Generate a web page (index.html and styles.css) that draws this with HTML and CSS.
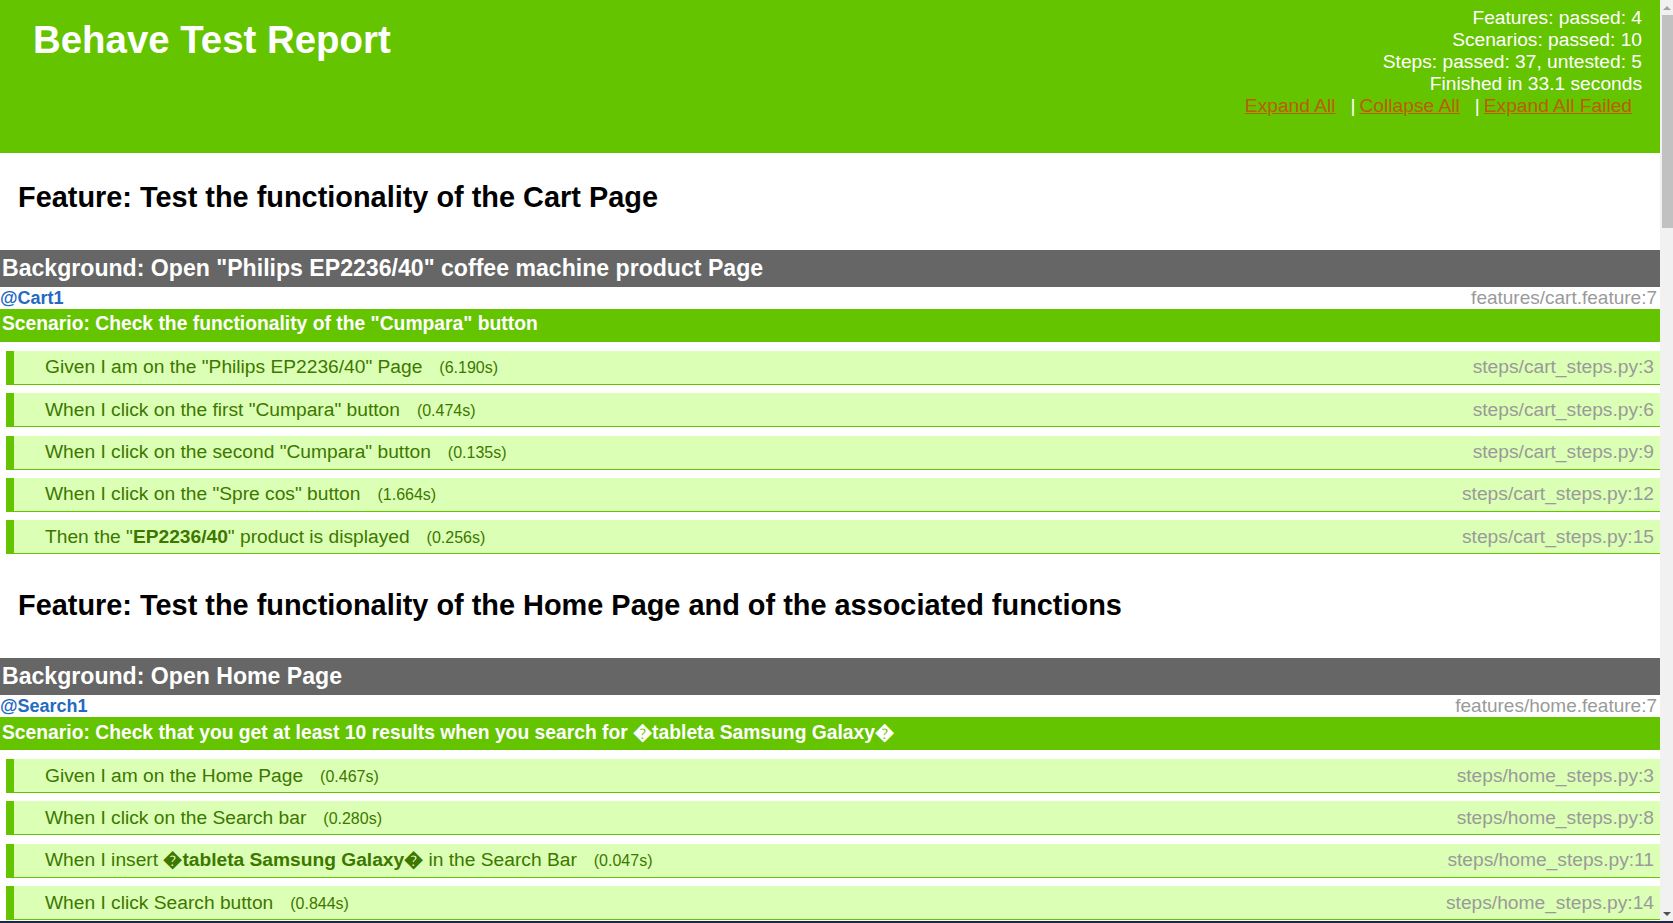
FILE: index.html
```html
<!DOCTYPE html>
<html lang="en">
<head>
<meta charset="utf-8">
<title>Behave Test Report</title>
<link rel="stylesheet" href="styles.css">
</head>
<body>
<div class="screen">
  <div class="viewport">
    <div class="page">
      <header class="report-header">
        <h1 class="report-title">Behave Test Report</h1>
        <div class="summary">
          <p>Features: passed: 4</p>
          <p>Scenarios: passed: 10</p>
          <p>Steps: passed: 37, untested: 5</p>
          <p>Finished in 33.1 seconds</p>
          <p class="controls"><a href="#">Expand All</a><span class="sep">|</span><a href="#">Collapse All</a><span class="sep">|</span><a href="#">Expand All Failed</a></p>
        </div>
      </header>

      <section class="feature">
        <h2 class="feature-title">Feature: Test the functionality of the Cart Page</h2>
        <h3 class="background-title">Background: Open "Philips EP2236/40" coffee machine product Page</h3>
        <div class="tag-line"><span class="tag">@Cart1</span><span class="scenario-file">features/cart.feature:7</span></div>
        <h4 class="scenario-title">Scenario: Check the functionality of the "Cumpara" button</h4>
        <div class="step"><span class="step-text">Given I am on the "Philips EP2236/40" Page<span class="duration">(6.190s)</span></span><span class="step-file">steps/cart_steps.py:3</span></div>
        <div class="step"><span class="step-text">When I click on the first "Cumpara" button<span class="duration">(0.474s)</span></span><span class="step-file">steps/cart_steps.py:6</span></div>
        <div class="step"><span class="step-text">When I click on the second "Cumpara" button<span class="duration">(0.135s)</span></span><span class="step-file">steps/cart_steps.py:9</span></div>
        <div class="step"><span class="step-text">When I click on the "Spre cos" button<span class="duration">(1.664s)</span></span><span class="step-file">steps/cart_steps.py:12</span></div>
        <div class="step"><span class="step-text">Then the "<b>EP2236/40</b>" product is displayed<span class="duration">(0.256s)</span></span><span class="step-file">steps/cart_steps.py:15</span></div>
      </section>

      <section class="feature">
        <h2 class="feature-title">Feature: Test the functionality of the Home Page and of the associated functions</h2>
        <h3 class="background-title">Background: Open Home Page</h3>
        <div class="tag-line"><span class="tag">@Search1</span><span class="scenario-file">features/home.feature:7</span></div>
        <h4 class="scenario-title">Scenario: Check that you get at least 10 results when you search for &#xFFFD;tableta Samsung Galaxy&#xFFFD;</h4>
        <div class="step"><span class="step-text">Given I am on the Home Page<span class="duration">(0.467s)</span></span><span class="step-file">steps/home_steps.py:3</span></div>
        <div class="step"><span class="step-text">When I click on the Search bar<span class="duration">(0.280s)</span></span><span class="step-file">steps/home_steps.py:8</span></div>
        <div class="step"><span class="step-text">When I insert <b>&#xFFFD;tableta Samsung Galaxy&#xFFFD;</b> in the Search Bar<span class="duration">(0.047s)</span></span><span class="step-file">steps/home_steps.py:11</span></div>
        <div class="step"><span class="step-text">When I click Search button<span class="duration">(0.844s)</span></span><span class="step-file">steps/home_steps.py:14</span></div>
      </section>
    </div>
    <div class="scrollbar">
      <div class="sb-btn"><span class="arrow-up"></span></div>
      <div class="sb-track"><div class="sb-thumb"></div></div>
      <div class="sb-btn"><span class="arrow-down"></span></div>
    </div>
  </div>
  <div class="taskbar-edge"></div>
</div>
</body>
</html>
```

FILE: styles.css
```css
html, body {
  margin: 0;
  padding: 0;
}

body {
  font-family: "Liberation Sans", Arial, sans-serif;
  background: #fff;
  color: #000;
}

.screen {
  display: flex;
  flex-direction: column;
  height: 923px;
  overflow: hidden;
}

.viewport {
  flex: 1;
  min-height: 0;
  display: flex;
}

.page {
  flex: 1;
  min-width: 0;
  overflow: hidden;
}

.taskbar-edge {
  height: 2px;
  background: #1d2a42;
}

/* header */
.report-header {
  height: 153px;
  background: #65c400;
  color: #fff;
  display: flex;
  justify-content: space-between;
  align-items: flex-start;
}

.report-title {
  margin: 0;
  padding: 17.5px 0 0 33px;
  font-size: 38.4px;
  line-height: 44px;
  font-weight: bold;
}

.summary {
  padding: 7px 18px 0 0;
  text-align: right;
  font-size: 19.2px;
  line-height: 22.1px;
}

.summary p {
  margin: 0;
}

.summary .controls {
  margin-right: 10px;
}

.controls a {
  color: #be5c00;
  text-decoration: underline;
}

.controls .sep {
  margin: 0 4px 0 15px;
  color: #fff;
}

/* features */
.feature {
  padding-top: 27.5px;
}

.feature + .feature {
  padding-top: 26px;
}

.feature-title {
  margin: 0 0 36.3px;
  padding-left: 18px;
  font-size: 28.9px;
  line-height: 33px;
  font-weight: bold;
}

.background-title {
  margin: 0;
  padding: 5px 3px 6px 2px;
  background: #666;
  color: #fff;
  font-size: 23.1px;
  line-height: 26px;
  font-weight: bold;
}

.tag-line {
  display: flex;
  justify-content: space-between;
  align-items: baseline;
  height: 22px;
  font-size: 19px;
  line-height: 22px;
  padding-right: 3px;
}

.tag {
  color: #246ac1;
  font-weight: bold;
  font-size: 18px;
}

.scenario-file {
  color: #9a9a9a;
}

.scenario-title {
  margin: 0 0 9px;
  padding: 4.5px 3px 6.5px 2px;
  background: #65c400;
  color: #fff;
  font-size: 19.3px;
  line-height: 22px;
  font-weight: bold;
}

.step {
  margin: 0 0 8.4px 6px;
  padding: 5.5px 6px 5.5px 31px;
  background: #dbffb4;
  border-left: 8px solid #65c400;
  border-bottom: 1px solid #65c400;
  display: flex;
  justify-content: space-between;
  align-items: baseline;
  color: #3d7700;
  font-size: 19.2px;
  line-height: 22px;
}

.step-text {
  white-space: nowrap;
}

.duration {
  font-size: 16px;
  line-height: 1;
  margin-left: 17px;
}

.step-file {
  color: #9a9a9a;
}

/* scrollbar */
.scrollbar {
  width: 13px;
  background: #f1f1f1;
  display: flex;
  flex-direction: column;
}

.sb-btn {
  height: 15px;
  display: flex;
  align-items: center;
  justify-content: center;
}

.arrow-up {
  width: 0;
  height: 0;
  border-left: 4px solid transparent;
  border-right: 4px solid transparent;
  border-bottom: 4px solid #a3a3a3;
}

.arrow-down {
  width: 0;
  height: 0;
  border-left: 4px solid transparent;
  border-right: 4px solid transparent;
  border-top: 4px solid #505050;
}

.sb-track {
  flex: 1;
}

.sb-thumb {
  height: 213px;
  margin-left: 2px;
  background: #c1c1c1;
}
```
